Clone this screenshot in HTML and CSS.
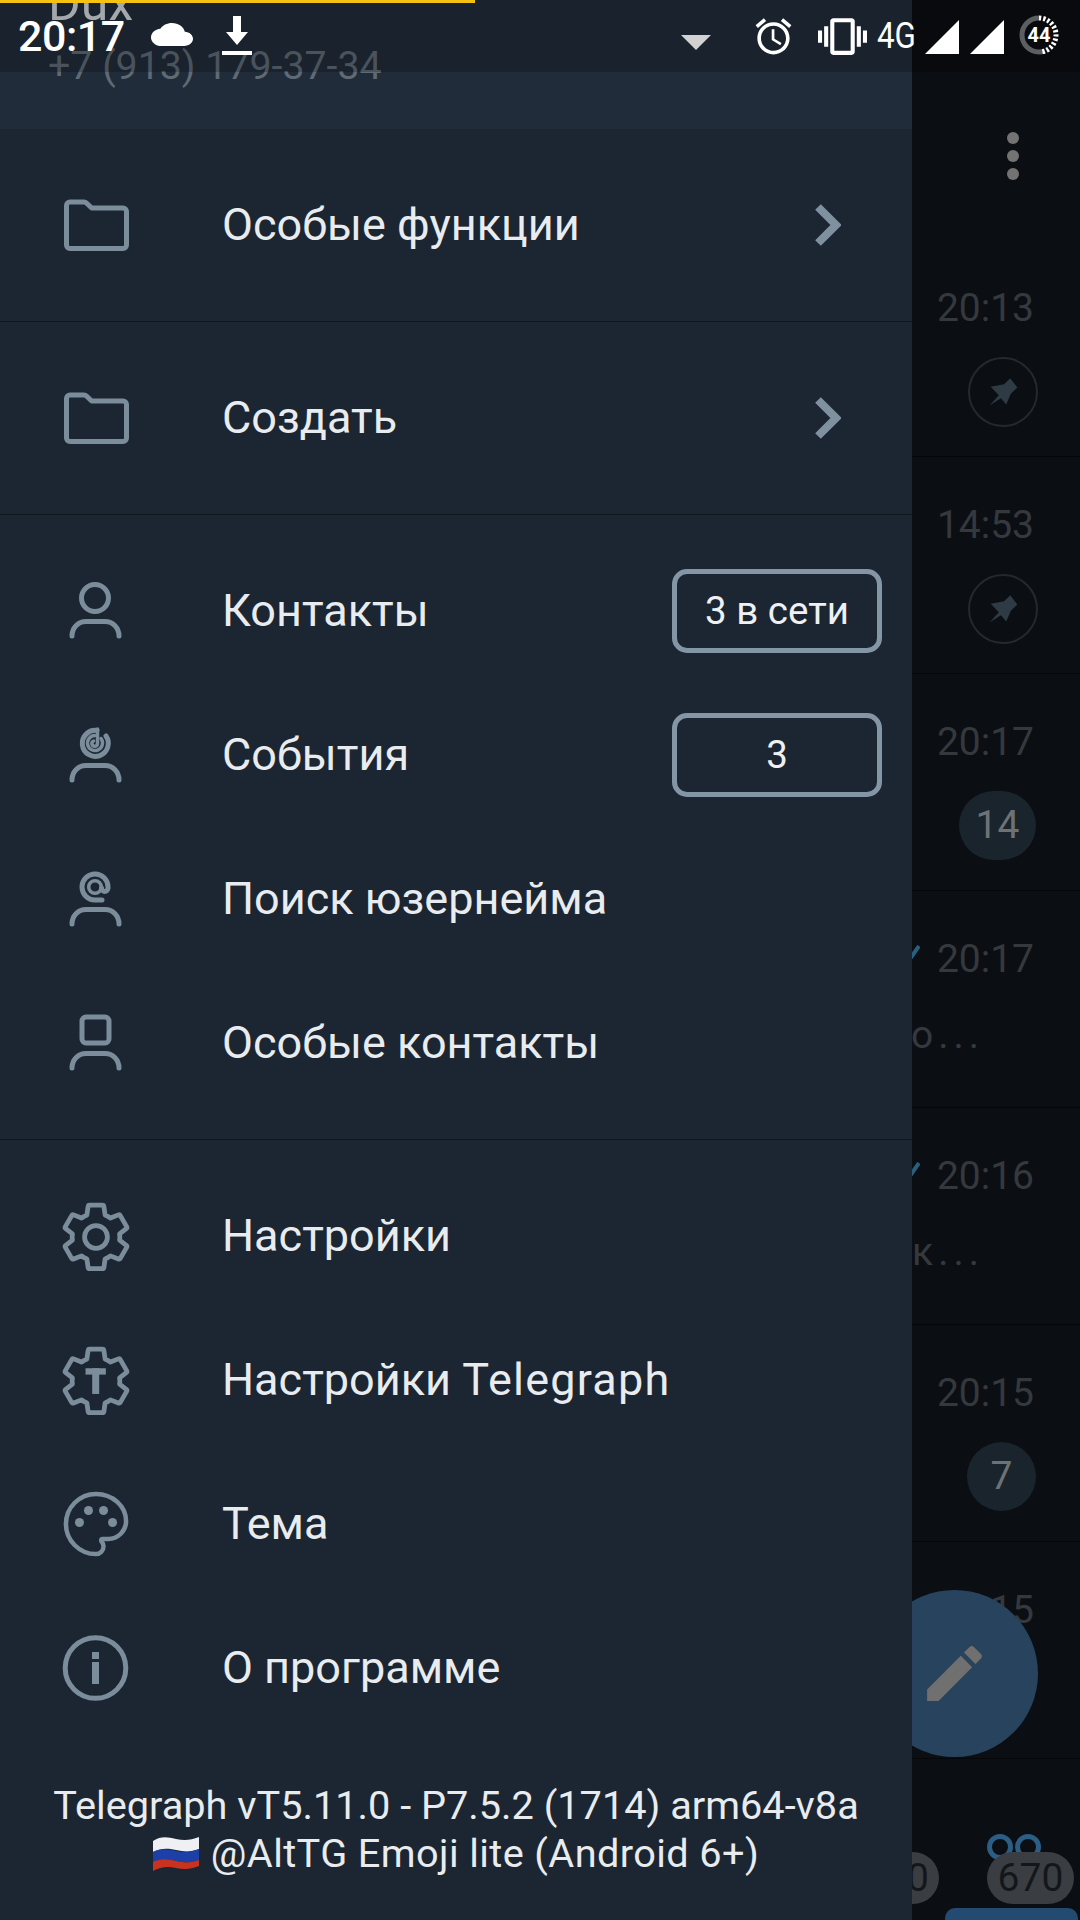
FILE: index.html
```html
<!doctype html>
<html>
<head>
<meta charset="utf-8">
<title>Telegraph</title>
<link rel="stylesheet" href="styles.css">
</head>
<body>
<div class="screen">

	<div class="statusbar">
		<div class="progress"></div>
		<span class="clock">20:17</span>
		<svg class="ic-cloud" viewBox="0 4 24 16" preserveAspectRatio="none"><path d="M19.35 10.04C18.67 6.59 15.64 4 12 4 9.11 4 6.6 5.64 5.35 8.04 2.34 8.36 0 10.91 0 14c0 3.31 2.69 6 6 6h13c2.76 0 5-2.24 5-5 0-2.64-2.05-4.78-4.65-4.96z"/></svg>
		<svg class="ic-download" viewBox="0 0 30 40"><path d="M11 0h8v16h7L15 29 4 16h7z"/><rect y="35" width="30" height="4"/></svg>
		<svg class="ic-more" viewBox="0 0 30 15"><path d="M0 0h30L15 15z"/></svg>
		<svg class="ic-alarm" viewBox="0 0 24 24"><path d="M22 5.72l-4.6-3.86-1.29 1.53 4.6 3.86L22 5.72zM7.88 3.39L6.6 1.86 2 5.71l1.29 1.53 4.59-3.85zM12.5 8H11v6l4.75 2.85.75-1.23-4-2.37V8zM12 4c-4.97 0-9 4.03-9 9s4.03 9 9 9 9-4.03 9-9-4.03-9-9-9zm0 16c-3.87 0-7-3.13-7-7s3.13-7 7-7 7 3.13 7 7-3.13 7-7 7z"/></svg>
		<svg class="ic-vibrate" viewBox="0 0 24 24"><path d="M0 15h2V9H0v6zm3 2h2V7H3v10zm19-8v6h2V9h-2zm-3 8h2V7h-2v10zM16.5 3h-9C6.67 3 6 3.67 6 4.5v15c0 .83.67 1.5 1.5 1.5h9c.83 0 1.5-.67 1.5-1.5v-15c0-.83-.67-1.5-1.5-1.5zM16 19H8V5h8v14z"/></svg>
		<span class="net">4G</span>
		<svg class="ic-signal" viewBox="0 0 34 34"><path d="M34 0v34H0z"/></svg>
		<svg class="ic-signal second" viewBox="0 0 34 34"><path d="M34 0v34H0z"/></svg>
		<svg class="ic-battery" viewBox="0 0 40 40">
			<g transform="rotate(-90 20 20)" fill="none" stroke-width="5">
				<circle cx="20" cy="20" r="17" stroke="#5c5f62" stroke-dasharray="0 47 60 0"/>
				<circle cx="20" cy="20" r="17" stroke="#fff" stroke-dasharray="2.3 2 2.3 2 2.3 2 2.3 2 2.3 2 2.3 2 2.3 2 2.3 2 2.3 2 2.3 2 2.3 2 2.3 60"/>
			</g>
			<text x="20" y="27" text-anchor="middle" class="battery-num">44</text>
		</svg>
	</div>

	<div class="drawer">
		<div class="account">
			<div class="account-name">Dux</div>
			<div class="account-phone">+7 (913) 179-37-34</div>
		</div>

		<div class="section">
			<div class="item">
				<svg class="icon" viewBox="0 0 80 80"><path class="line" d="M10.500 20.500c0-2 1.500-3.500 3.500-3.500h14c1 0 2 .5 2.700 1.200l5 4.800H67c2 0 3.500 1.500 3.500 3.500v33.500c0 2-1.500 3.500-3.500 3.500H14c-2 0-3.500-1.500-3.500-3.500z"/></svg>
				<span class="label">Особые функции</span>
				<svg class="chevron" viewBox="0 0 26 42"><path d="M3 3l18 18L3 39"/></svg>
			</div>
		</div>

		<div class="section">
			<div class="item">
				<svg class="icon" viewBox="0 0 80 80"><path class="line" d="M10.500 20.500c0-2 1.500-3.500 3.500-3.500h14c1 0 2 .5 2.700 1.200l5 4.800H67c2 0 3.500 1.500 3.500 3.500v33.500c0 2-1.500 3.500-3.500 3.500H14c-2 0-3.500-1.500-3.500-3.500z"/></svg>
				<span class="label">Создать</span>
				<svg class="chevron" viewBox="0 0 26 42"><path d="M3 3l18 18L3 39"/></svg>
			</div>
		</div>

		<div class="section">
			<div class="item">
				<svg class="icon" viewBox="0 0 80 80"><circle class="line" cx="39" cy="27" r="13.500"/><path class="line" d="M16 65c0-8 6-14.500 14-14.500h19c8 0 14 6.500 14 14.500"/></svg>
				<span class="label">Контакты</span>
				<span class="pill">3 в сети</span>
			</div>
			<div class="item">
				<svg class="icon" viewBox="0 0 80 80"><path class="line" d="M41 15.500A13 13 0 1 0 50 21"/><path class="line thin" d="M39 20.500a7.500 7.500 0 1 0 6 3"/><path class="line thin" d="M41.500 14v14.500a2.800 2.800 0 1 1-4-2.500"/><path class="line" d="M16 65c0-8 6-14.500 14-14.500h19c8 0 14 6.500 14 14.500"/></svg>
				<span class="label">События</span>
				<span class="pill">3</span>
			</div>
			<div class="item">
				<svg class="icon" viewBox="0 0 80 80"><path class="line" d="M46 41h-7a13 13 0 1 1 13-13v1c0 4.500-6.500 4.500-6.500 0"/><circle class="line thin" cx="39" cy="28" r="6.300"/><path class="line" d="M16 65c0-8 6-14.500 14-14.500h19c8 0 14 6.500 14 14.500"/></svg>
				<span class="label">Поиск юзернейма</span>
			</div>
			<div class="item">
				<svg class="icon" viewBox="0 0 80 80"><rect class="line" x="26" y="14" width="27" height="26" rx="4"/><path class="line" d="M16 65c0-8 6-14.500 14-14.500h19c8 0 14 6.500 14 14.500"/></svg>
				<span class="label">Особые контакты</span>
			</div>
		</div>

		<div class="section last">
			<div class="item">
				<svg class="icon" viewBox="-.6 -.9 25.200 25.200"><path class="gear" d="M19.43 12.98c.04-.32.07-.64.07-.98s-.03-.66-.07-.98l2.110-1.650c.19-.15.24-.42.12-.64l-2-3.460c-.12-.22-.39-.3-.61-.22l-2.490 1c-.52-.4-1.080-.73-1.690-.98l-.38-2.650C14.460 2.180 14.250 2 14 2h-4c-.25 0-.46.18-.49.42l-.38 2.650c-.61.25-1.170.59-1.690.98l-2.490-1c-.23-.09-.49 0-.61.22l-2 3.460c-.13.22-.07.49.12.64l2.110 1.650c-.04.32-.07.65-.07.98s.03.66.07.98l-2.110 1.650c-.19.15-.24.42-.12.64l2 3.460c.12.22.39.3.61.22l2.490-1c.52.4 1.080.73 1.690.98l.38 2.650c.03.24.24.42.49.42h4c.25 0 .46-.18.49-.42l.38-2.650c.61-.25 1.170-.59 1.690-.98l2.490 1c.23.09.49 0 .61-.22l2-3.460c.12-.22.07-.49-.12-.64l-2.110-1.650z"/><circle class="gear" cx="12" cy="12" r="3.600"/></svg>
				<span class="label">Настройки</span>
			</div>
			<div class="item">
				<svg class="icon" viewBox="-.6 -.9 25.200 25.200"><path class="gear" d="M19.43 12.98c.04-.32.07-.64.07-.98s-.03-.66-.07-.98l2.110-1.650c.19-.15.24-.42.12-.64l-2-3.460c-.12-.22-.39-.3-.61-.22l-2.490 1c-.52-.4-1.080-.73-1.690-.98l-.38-2.650C14.460 2.180 14.250 2 14 2h-4c-.25 0-.46.18-.49.42l-.38 2.650c-.61.25-1.170.59-1.690.98l-2.490-1c-.23-.09-.49 0-.61.22l-2 3.460c-.13.22-.07.49.12.64l2.110 1.650c-.04.32-.07.65-.07.98s.03.66.07.98l-2.110 1.650c-.19.15-.24.42-.12.64l2 3.460c.12.22.39.3.61.22l2.490-1c.52.4 1.080.73 1.690.98l.38 2.650c.03.24.24.42.49.42h4c.25 0 .46-.18.49-.42l.38-2.650c.61-.25 1.170-.59 1.690-.98l2.490 1c.23.09.49 0 .61-.22l2-3.460c.12-.22.07-.49-.12-.64l-2.110-1.650z"/><rect class="solid" x="8.700" y="8" width="6.400" height="2"/><rect class="solid" x="10.800" y="8" width="2.200" height="8.100"/></svg>
				<span class="label">Настройки <span class="latin">Telegraph</span></span>
			</div>
			<div class="item">
				<svg class="icon" viewBox="-1.300 -1.300 26.600 26.600"><path class="gear" d="M12 22C6.490 22 2 17.510 2 12S6.490 2 12 2s10 4.040 10 9c0 3.310-2.690 6-6 6h-1.770c-.28 0-.5.22-.5.5 0 .12.05.23.13.33.41.47.64 1.060.64 1.670 0 1.380-1.120 2.500-2.500 2.500z"/><circle class="solid" cx="6.500" cy="11.500" r="1.500"/><circle class="solid" cx="9.500" cy="7.500" r="1.500"/><circle class="solid" cx="14.500" cy="7.500" r="1.500"/><circle class="solid" cx="17.500" cy="11.500" r="1.500"/></svg>
				<span class="label">Тема</span>
			</div>
			<div class="item">
				<svg class="icon" viewBox="0 0 80 80"><circle class="line" cx="39.500" cy="40" r="30.300"/><rect class="solid" x="36" y="24" width="7" height="7"/><rect class="solid" x="36" y="34" width="7" height="22"/></svg>
				<span class="label">О программе</span>
			</div>
		</div>

		<div class="version">
			<div>Telegraph vT5.11.0 - P7.5.2 (1714) arm64-v8a</div>
			<div class="version-line">
				<svg class="flag" viewBox="0 0 46 34">
					<path fill="#eef0f3" d="M0 4c8-5 14-4 23-2s15 1 23-2v12c-8 3-14 3-23 1S8 11 0 15z"/>
					<path fill="#1c3fa8" d="M0 15c8-4 14-3 23-1s15 1 23-2v11c-8 3-14 3-23 1S8 22 0 26z"/>
					<path fill="#c8321f" d="M0 25c8-4 14-3 23-1s15 2 23-1v6c-8 3-14 4-23 2S8 30 0 34z"/>
				</svg>
				<span class="version-text">@AltTG Emoji lite (Android 6+)</span>
			</div>
		</div>
	</div>

	<div class="chats">
		<div class="toolbar">
			<div class="dots"><i></i><i></i><i></i></div>
		</div>
		<div class="row">
			<div class="time">20:13</div>
			<div class="pin"><svg viewBox="0 0 70 70"><path d="M21 50l10-11-8.700-9 14.400-2.700 6.600-6.600L51 30.700l-7 6.600L39 49l-5.700-6.700z"/></svg></div>
		</div>
		<div class="row">
			<div class="time">14:53</div>
			<div class="pin"><svg viewBox="0 0 70 70"><path d="M21 50l10-11-8.700-9 14.400-2.700 6.600-6.600L51 30.700l-7 6.600L39 49l-5.700-6.700z"/></svg></div>
		</div>
		<div class="row">
			<div class="time">20:17</div>
			<div class="count">14</div>
		</div>
		<div class="row">
			<div class="time"><svg class="tick" viewBox="0 0 18 14"><path d="M8 14L17 1"/></svg>20:17</div>
			<div class="preview">о...</div>
		</div>
		<div class="row">
			<div class="time"><svg class="tick" viewBox="0 0 18 14"><path d="M8 14L17 1"/></svg>20:16</div>
			<div class="preview">к...</div>
		</div>
		<div class="row">
			<div class="time">20:15</div>
			<div class="count small">7</div>
		</div>
		<div class="row">
			<div class="time">20:15</div>
		</div>
		<div class="tabs">
			<div class="tab-badges">
				<span class="tab-badge">0</span>
				<span class="tab-badge active">
					<svg class="tab-icon" viewBox="0 0 54 26"><circle cx="13" cy="13" r="10.500"/><circle cx="41" cy="13" r="10.500"/></svg>
					670
				</span>
			</div>
			<div class="tab-line"></div>
		</div>
		<div class="fab">
			<svg viewBox="0 0 24 24"><path d="M3 17.250V21h3.750L17.810 9.940l-3.750-3.750L3 17.250zM20.710 7.040c.39-.39.39-1.020 0-1.410l-2.340-2.340c-.39-.39-1.020-.39-1.410 0l-1.830 1.830 3.750 3.750 1.830-1.830z"/></svg>
		</div>
	</div>

</div>
</body>
</html>
```

FILE: styles.css
```css
*{margin:0;padding:0;box-sizing:border-box;}
body{background:#0b0e13;font-family:"Roboto","Noto Sans",sans-serif;}
.screen{position:relative;display:flex;width:1080px;height:1920px;overflow:hidden;}

/* status bar lies over the drawer and the list */
.statusbar{position:absolute;left:0;top:0;z-index:5;display:flex;align-items:center;width:100%;height:72px;padding:0 21px 0 18px;background:rgba(0,0,0,.22);}
.statusbar svg{flex:none;fill:#fff;}
.progress{position:absolute;left:0;top:0;width:475px;height:3px;background:#f5c211;}
.clock{font-size:43px;font-weight:500;color:#fff;letter-spacing:-.5px;}
.ic-cloud{width:42px;height:23px;margin:-4px 0 0 26px;}
.ic-download{width:30px;height:40px;margin-left:29px;}
.statusbar .ic-more{width:30px;height:15px;margin:12px 0 0 auto;fill:#d2d2d2;}
.ic-alarm{width:43px;height:43px;margin-left:41px;}
.ic-vibrate{width:49px;height:49px;margin-left:23px;}
.net{width:38px;margin-left:10px;font-size:36px;color:#fff;transform:scaleX(.87);transform-origin:left center;}
.ic-signal{width:34px;height:34px;margin:2px 0 0 10px;}
.ic-signal.second{margin-left:11px;}
.ic-battery{width:40px;height:40px;margin:-2px 0 0 15px;}
.battery-num{font-size:20px;font-weight:700;fill:#fff;}

/* drawer */
.drawer{position:relative;z-index:2;flex:none;display:flex;flex-direction:column;width:912px;background:#1c2632;}
.account{display:flex;flex-direction:column;justify-content:flex-end;flex:none;height:129px;padding:0 0 41px 48px;overflow:hidden;background:#212c3a;}
.account-name{font-size:50px;line-height:50px;color:#d4d8dc;margin-bottom:16px;}
.account-phone{font-size:39.300px;line-height:44px;color:#5f6a75;}
.section{padding:24px 0;border-bottom:1px solid #10161d;}
.section.last{border-bottom:0;}
.item{display:flex;align-items:center;height:144px;padding:0 30px 0 56px;}
.icon{flex:none;width:80px;height:80px;margin-right:86px;}
.line{fill:none;stroke:#7b8c9b;stroke-width:5;stroke-linecap:round;stroke-linejoin:round;}
.thin{stroke-width:3.500;}
.gear{fill:none;stroke:#7b8c9b;stroke-width:1.500;stroke-linejoin:round;}
.solid{fill:#7b8c9b;}
.label{flex:1;margin-top:-2px;font-size:45px;color:#e9ecef;}
.latin{letter-spacing:1.200px;}
.chevron{flex:none;width:26px;height:42px;margin-right:41px;fill:none;stroke:#7f909f;stroke-width:8;}
.pill{flex:none;width:210px;height:84px;border:5.500px solid #8496a6;border-radius:15px;font-size:38.500px;line-height:73px;text-align:center;color:#eef0f2;}
.version{margin-top:18px;font-size:39.700px;line-height:48px;text-align:center;color:#e9ecef;}
.version-line{display:flex;justify-content:center;align-items:center;gap:12px;}
.version-text{letter-spacing:.4px;}
.flag{flex:none;width:46px;height:34px;}

/* list behind the drawer */
.chats{position:relative;flex:1;display:flex;flex-direction:column;overflow:hidden;}
.toolbar{flex:none;height:240px;padding:132px 0 0 95px;}
.dots{display:flex;flex-direction:column;gap:6px;}
.dots i{display:block;width:12px;height:12px;border-radius:50%;background:#737373;}
.row{flex:none;display:flex;flex-direction:column;align-items:flex-end;height:217px;padding:44px 44px 0 0;border-bottom:1px solid #050608;}
.time{display:flex;align-items:center;margin-right:2px;font-size:39px;line-height:48px;color:#35393e;}
.tick{width:18px;height:14px;margin:-14px 17px 0 -26px;fill:none;stroke:#2a5f80;stroke-width:4;}
.pin{width:70px;height:70px;margin:25px -2px 0 0;border:2.500px solid #25292e;border-radius:50%;}
.pin svg{display:block;width:65px;height:65px;fill:#2e3b45;}
.count{width:77px;height:69px;margin-top:25px;border-radius:35px;background:#1a242c;font-size:39px;line-height:69px;text-align:center;color:#6d7276;}
.count.small{width:69px;}
.preview{margin:28px 52px 0 0;font-size:39px;line-height:48px;letter-spacing:5px;color:#35393e;white-space:nowrap;}
.tabs{flex:1;display:flex;flex-direction:column;justify-content:flex-end;}
.tab-badges{display:flex;justify-content:flex-end;gap:48px;padding-right:6px;}
.tab-badge{position:relative;flex:none;width:87px;height:52px;padding-right:10px;border-radius:26px;background:#3a3e42;font-size:39px;line-height:52px;text-align:right;color:#14171a;}
.tab-badge.active{padding-right:0;text-align:center;}
.tab-icon{position:absolute;left:0;top:-18px;z-index:-1;width:54px;height:26px;fill:none;stroke:#2b5d85;stroke-width:5;}
.tab-line{height:12px;margin:4px 2px 0 33px;border-radius:10px 10px 0 0;background:#234a70;}

/* floating button sits on top of the last row, partly under the drawer */
.fab{position:absolute;left:-41px;top:1590px;display:flex;align-items:center;justify-content:center;width:167px;height:167px;border-radius:50%;background:#28435e;}
.fab svg{width:73px;height:73px;fill:#707070;}
```
